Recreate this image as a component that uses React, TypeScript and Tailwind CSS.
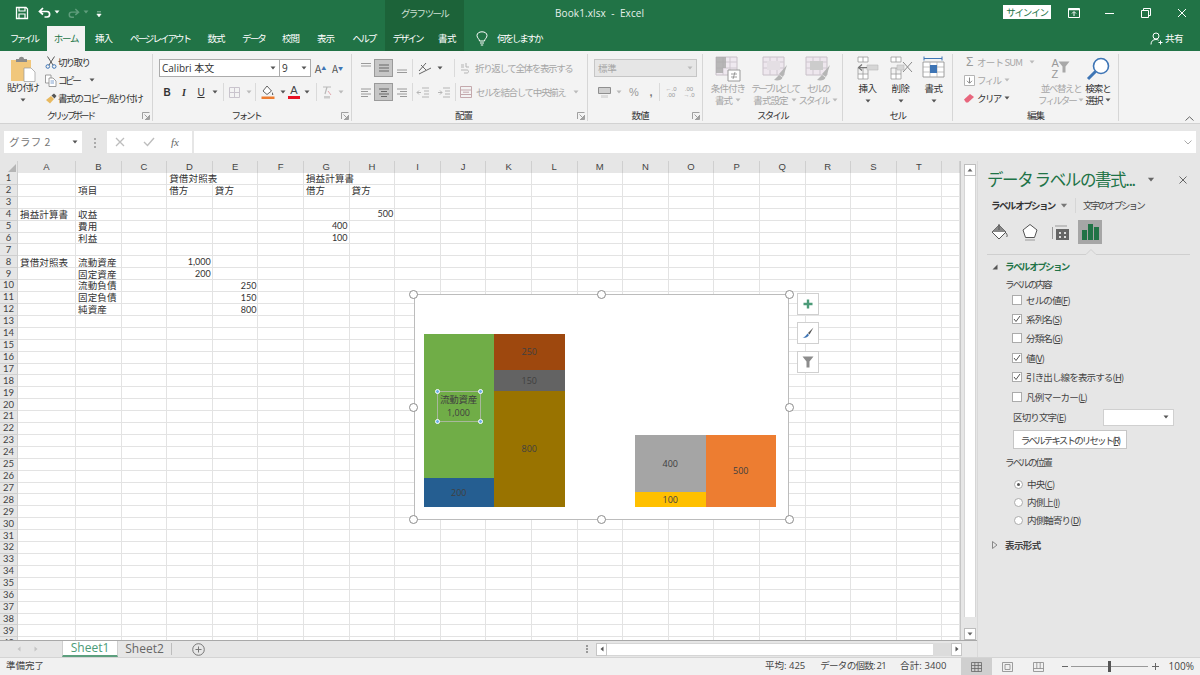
import type { ReactNode } from 'react'

const Caret = ({ c = '#555', big }: { c?: string; big?: boolean }) => (
  <svg width={big ? 8 : 6} height={big ? 5 : 4} viewBox="0 0 6 4" className="shrink-0">
    <path d="M0.5 0.5H5.5L3 3.5Z" fill={c} />
  </svg>
)

const Launcher = () => (
  <svg width="8" height="8" viewBox="0 0 8 8" className="shrink-0">
    <path d="M0.5 7V0.5H7.5M7.5 3V7.5H3M2.5 2.5L6.5 6.5M6.5 4V6.5H4" fill="none" stroke="#8a8a8a" strokeWidth="0.8" />
  </svg>
)

const Sep = ({ className = '' }: { className?: string }) => <div className={`w-px h-[18px] bg-[#dadada] shrink-0 ${className}`} />

// ---------- title bar ----------
const TitleBar = () => (
  <div className="flex h-[26px] bg-[#217346] text-white shrink-0">
    <div className="w-[385px] flex items-center pl-[15px]">
      <svg width="14" height="14" viewBox="0 0 14 14">
        <path d="M1.5 1.5H11L12.5 3V12.5H1.5Z" fill="none" stroke="#fff" strokeWidth="1.3" />
        <path d="M4 1.5V5H10V1.5M4 12.5V8H10V12.5" fill="none" stroke="#fff" strokeWidth="1.2" />
      </svg>
      <svg width="14" height="12" viewBox="0 0 14 12" className="ml-[9px]">
        <path d="M5 1L1.5 4.5L5 7.5M2 4.5H9C12.5 4.5 12.5 10 9 10H6.5" fill="none" stroke="#fff" strokeWidth="1.7" />
      </svg>
      <div className="ml-[2px] mb-[3px]"><Caret c="#fff" /></div>
      <svg width="13" height="11" viewBox="0 0 14 12" className="ml-[7px]">
        <path d="M9 1L12.5 4.5L9 7.5M12 4.5H5C1.5 4.5 1.5 10 5 10H7.5" fill="none" stroke="#5f9d7c" strokeWidth="1.6" />
      </svg>
      <div className="ml-[3px] mb-[3px]"><Caret c="#5f9d7c" /></div>
      <svg width="6" height="7" viewBox="0 0 6 7" className="ml-[7px] mt-[2px]">
        <path d="M1 0.8H5M0.8 3H5.2L3 6Z" fill="#fff" stroke="#fff" strokeWidth="0.5" />
      </svg>
    </div>
    <div className="w-[79px] bg-[#1c6339] flex items-center justify-center text-[9.5px] tracking-[-1.7px] text-[#cfe0d6]">グラフ ツール</div>
    <div className="w-[539px] pl-[91px] flex items-center text-[10px] text-[#e8f1ec] tracking-[0.1px] font-['Open_Sans','Noto_Sans_CJK_JP',sans-serif]">Book1.xlsx&nbsp; -&nbsp; Excel</div>
    <div className="w-[48px] h-[14px] mt-[5px] bg-white text-[#217346] flex items-center justify-center text-[9.5px] tracking-[-1.2px]">サインイン</div>
    <div className="flex-1 flex items-center">
      <svg width="12" height="10" viewBox="0 0 12 10" className="ml-[17px]">
        <path d="M0.5 0.5H11.5V9.5H0.5Z" fill="none" stroke="#fff" />
        <path d="M0.5 1.5H11.5" stroke="#fff" strokeWidth="1.5" />
        <path d="M6 8V4M4 5.5L6 3.5L8 5.5" fill="none" stroke="#fff" />
      </svg>
      <div className="w-[9px] h-px bg-white ml-[25px]" />
      <svg width="10" height="10" viewBox="0 0 10 10" className="ml-[27px]">
        <path d="M0.5 2.5H7.5V9.5H0.5ZM2.5 2.5V0.5H9.5V7.5H7.5" fill="none" stroke="#fff" />
      </svg>
      <svg width="10" height="10" viewBox="0 0 10 10" className="ml-[26px]">
        <path d="M1 1L9 9M9 1L1 9" stroke="#fff" strokeWidth="1" />
      </svg>
    </div>
  </div>
)

const tabs = [
  { label: 'ファイル', w: 'w-[47px]', tr: 'tracking-[-2.6px]' },
  { label: 'ホーム', w: 'w-[38px]', tr: 'tracking-[-1.3px]', active: true },
  { label: '挿入', w: 'w-[37px]', tr: 'tracking-[-1.1px]' },
  { label: 'ページ レイアウト', w: 'w-[76px]', tr: 'tracking-[-2px]' },
  { label: '数式', w: 'w-[36px]', tr: 'tracking-[-1px]' },
  { label: 'データ', w: 'w-[39px]', tr: 'tracking-[-1.8px]' },
  { label: '校閲', w: 'w-[35px]', tr: 'tracking-[-1px]' },
  { label: '表示', w: 'w-[35px]', tr: 'tracking-[-1px]' },
  { label: 'ヘルプ', w: 'w-[42px]', tr: 'tracking-[-1.9px]' },
  { label: 'デザイン', w: 'w-[45px]', tr: 'tracking-[-2px]', ctx: true },
  { label: '書式', w: 'w-[34px]', tr: 'tracking-[-0.4px]', ctx: true },
]

const TabRow = () => (
  <div className="flex h-[25px] bg-[#217346] text-[9.5px] text-white shrink-0">
    {tabs.map((t) => (
      <div
        key={t.label}
        className={`${t.w} ${t.tr} flex items-center justify-center ${t.active ? 'bg-[#f3f3f3] text-[#217346]' : ''} ${t.ctx ? 'bg-[#1c6339]' : ''}`}
      >
        {t.label}
      </div>
    ))}
    <svg width="12" height="15" viewBox="0 0 12 15" className="ml-[12px] mt-[5px]">
      <path d="M3.5 10C3.5 8 1 7 1 4.5C1 2.2 3.2 0.8 6 0.8C8.8 0.8 11 2.2 11 4.5C11 7 8.5 8 8.5 10ZM4 12H8M4.8 14H7.2" fill="none" stroke="#fff" strokeWidth="1" />
    </svg>
    <div className="ml-[9px] flex items-center text-[9.5px] tracking-[-2.1px]">何をしますか</div>
    <div className="ml-auto mr-[17px] flex items-center gap-[2px] text-[9.5px] tracking-[-0.5px]">
      <svg width="13" height="13" viewBox="0 0 13 13">
        <circle cx="6" cy="4" r="3" fill="none" stroke="#fff" />
        <path d="M1 12.5C1 9 3 7.5 6 7.5C7 7.5 8 7.8 8.6 8.3M10.5 8.5V12.5M8.5 10.5H12.5" fill="none" stroke="#fff" />
      </svg>
      共有
    </div>
  </div>
)

// ---------- ribbon ----------
const Group = ({ w, label, launcher, tr = 'tracking-[-0.9px]', lp = '', children }: { w: string; label: string; launcher?: boolean; tr?: string; lp?: string; children: ReactNode }) => (
  <div className={`${w} h-[67px] shrink-0 flex flex-col border-r border-[#d6d6d6]`}>
    <div className="h-[54px]">{children}</div>
    <div className={`h-[13px] relative top-[1px] flex items-center justify-center text-[9.5px] text-[#333] ${tr} ${lp}`}>
      {label}
      {launcher && (
        <div className="absolute right-[2px] top-[3px]">
          <Launcher />
        </div>
      )}
    </div>
  </div>
)

const Lines = ({ d, c = '#9a9a9a' }: { d: string; c?: string }) => (
  <svg width="14" height="14" viewBox="0 0 14 14">
    <path d={d} fill="none" stroke={c} strokeWidth="1" />
  </svg>
)

const Clipboard = () => (
  <Group w="w-[153px]" label="クリップボード" launcher tr="tracking-[-2.8px]" lp="pr-[12px]">
    <div className="flex">
      <div className="w-[45px] flex flex-col items-center pt-[2px] text-[#333]">
        <svg width="26" height="26" viewBox="0 0 26 26">
          <path d="M1 4H21V25H1Z" fill="#f1c77c" />
          <path d="M6 3H9C9 0 14 0 14 3H17V6H6Z" fill="#8b8b8b" />
          <path d="M14 12H21L25 16V25.5H14Z" fill="#fff" stroke="#999" strokeWidth="0.7" />
        </svg>
        <div className="text-[9.5px] tracking-[-1.7px] leading-[11px]">貼り付け</div>
        <div className="mt-[5px]"><Caret /></div>
      </div>
      <div className="flex flex-col text-[9.5px] text-[#333] tracking-[-1.3px] -mt-[1px]">
        <div className="h-[18px] flex items-center">
          <svg width="12" height="13" viewBox="0 0 12 13" className="mr-[1px]">
            <path d="M2.5 0.5L8 9M9.5 0.5L4 9" stroke="#555" strokeWidth="1" fill="none" />
            <circle cx="2.8" cy="10.5" r="1.8" fill="none" stroke="#3e75b5" />
            <circle cx="9.2" cy="10.5" r="1.8" fill="none" stroke="#3e75b5" />
          </svg>
          <span className="tracking-[-1.7px]">切り取り</span>
        </div>
        <div className="h-[18px] flex items-center">
          <svg width="12" height="13" viewBox="0 0 12 13" className="mr-[1px]">
            <path d="M0.5 1H6V9H0.5Z" fill="#fff" stroke="#888" strokeWidth="0.8" />
            <path d="M4 4H8L11 7V12.5H4Z" fill="#fff" stroke="#888" strokeWidth="0.8" />
            <path d="M5.5 7H9M5.5 9H9" stroke="#4a7dbb" strokeWidth="0.7" />
          </svg>
          <span className="tracking-[-2.4px]">コピー</span>
          <div className="ml-[10px]"><Caret /></div>
        </div>
        <div className="h-[18px] flex items-center">
          <svg width="12" height="11" viewBox="0 0 12 11" className="mr-[1px]">
            <path d="M1 7L6 3L9 6L5 10.5Z" fill="#e8b95f" />
            <path d="M6.5 2.5L9 0.5L11.5 3L9.5 5.5Z" fill="#555" />
          </svg>
          書式のコピー/貼り付け
        </div>
      </div>
    </div>
  </Group>
)

const Font = () => (
  <Group w="w-[199px]" label="フォント" launcher tr="tracking-[-2.2px]" lp="pr-[12px]">
    <div className="pl-[6px] pt-[5px] text-[#333]">
      <div className="flex h-[18px] items-center">
        <div className="w-[121px] h-[18px] bg-white border border-[#ababab] flex items-center justify-between pl-[2px] pr-[3px] text-[10px] font-['Open_Sans','Noto_Sans_CJK_JP',sans-serif]">
          <span>Calibri 本文</span>
          <Caret />
        </div>
        <div className="w-[31px] h-[18px] bg-white border border-l-0 border-[#ababab] flex items-center justify-between pl-[2px] pr-[3px] text-[10px] font-['Open_Sans',sans-serif]">
          <span>9</span>
          <Caret />
        </div>
        <div className="w-[17px] ml-[1px] text-[11px] text-center text-[#555]">A<sup className="text-[5px] text-[#3e75b5]">▲</sup></div>
        <div className="w-[17px] text-[10px] text-center text-[#555]">A<sup className="text-[5px] text-[#3e75b5]">▼</sup></div>
      </div>
      <div className="flex h-[18px] items-center mt-[6px] text-[10px] font-['Liberation_Sans',sans-serif]">
        <div className="w-[16px] text-center font-bold">B</div>
        <div className="w-[18px] text-center italic font-bold font-['Liberation_Serif',serif]">I</div>
        <div className="w-[16px] text-center underline">U</div>
        <div className="w-[12px] flex justify-center"><Caret /></div>
        <Sep className="ml-[2px]" />
        <div className="w-[20px] flex justify-center">
          <svg width="11" height="11" viewBox="0 0 11 11">
            <path d="M0.5 0.5H10.5V10.5H0.5ZM5.5 0.5V10.5M0.5 5.5H10.5" fill="none" stroke="#c9c4cd" />
          </svg>
        </div>
        <div className="w-[10px] flex justify-center"><Caret c="#bbb" /></div>
        <Sep className="ml-[1px]" />
        <div className="w-[24px] flex justify-center">
          <svg width="14" height="14" viewBox="0 0 14 14">
            <path d="M6 1L10.5 6L6 9.5L2 6Z" fill="#fff" stroke="#555" strokeWidth="0.9" />
            <path d="M11 7L12.5 9.5L11 10Z" fill="#555" />
            <path d="M0.5 11.5H13.5V14H0.5Z" fill="#ed7d31" />
          </svg>
        </div>
        <div className="w-[6px] flex justify-center"><Caret /></div>
        <div className="w-[16px] flex justify-center">
          <div className="flex flex-col items-center">
            <span className="text-[11px] leading-[10px] text-[#444]">A</span>
            <div className="w-[12px] h-[3px] bg-[#e81123] mt-[1px]" />
          </div>
        </div>
        <div className="w-[10px] flex justify-center"><Caret /></div>
        <Sep className="ml-[4px]" />
        <div className="w-[20px] flex justify-center">
          <svg width="10" height="13" viewBox="0 0 10 13">
            <path d="M1 1H9M5 1L3 8" stroke="#b9b9b9" strokeWidth="1.2" fill="none" />
            <path d="M2 10H8V12.5H2Z" fill="#cccccc" />
            <path d="M6 5L9 9" stroke="#e3a7ae" />
          </svg>
        </div>
        <div className="w-[8px] flex justify-center"><Caret c="#bbb" /></div>
      </div>
    </div>
  </Group>
)

const Selected = ({ children, s = 'w-[19px] h-[18px]' }: { children: ReactNode; s?: string }) => (
  <div className={`${s} bg-[#c6c6c6] border border-[#9a9a9a] flex items-center justify-center`}>{children}</div>
)

const Alignment = () => (
  <Group w="w-[236px]" label="配置" launcher lp="pr-[12px]">
    <div className="pl-[5px] pt-[5px] text-[9.5px] tracking-[-1.35px] text-[#a6a6a6]">
      <div className="flex h-[18px] items-center">
        <div className="w-[17px] flex justify-center"><Lines d="M2 2.5H12M2 5H12" /></div>
        <Selected><Lines d="M2 4H12M2 7H12M2 10H12" c="#666" /></Selected>
        <div className="w-[18px] flex justify-center"><Lines d="M2 9H12M2 11.5H12" /></div>
        <Sep className="ml-[1px]" />
        <div className="w-[24px] flex justify-center">
          <svg width="14" height="13" viewBox="0 0 14 13">
            <path d="M1 9L8 1M3 3L8 8M1 12L13 6" fill="none" stroke="#666" strokeWidth="1" />
          </svg>
        </div>
        <div className="w-[6px] flex justify-center"><Caret /></div>
        <div className="w-[10px]" />
        <Sep className="ml-[1px]" />
        <div className="w-[20px] flex justify-center">
          <svg width="11" height="12" viewBox="0 0 11 12">
            <path d="M1 3H4M1 5H4M6 1V5H9M1 8H7C9 8 9 11 7 11H4" fill="none" stroke="#b5b5b5" />
          </svg>
        </div>
        <span>折り返して全体を表示する</span>
      </div>
      <div className="flex h-[18px] items-center mt-[6px]">
        <div className="w-[17px] flex justify-center"><Lines d="M2 4H12M2 6.5H9M2 9H12M2 11.5H9" /></div>
        <Selected><Lines d="M2 4H12M4 6.5H10M2 9H12M4 11.5H10" c="#666" /></Selected>
        <div className="w-[18px] flex justify-center"><Lines d="M2 4H12M5 6.5H12M2 9H12M5 11.5H12" /></div>
        <Sep className="ml-[1px]" />
        <div className="w-[20px] ml-[0px] flex justify-center"><Lines d="M6 3H13M8 6H13M8 9H13M6 12H13M5 7.5H1M3 5.5L1 7.5L3 9.5" c="#b5b5b5" /></div>
        <div className="w-[22px] flex justify-center"><Lines d="M6 3H13M8 6H13M8 9H13M6 12H13M1 7.5H5M3 5.5L5 7.5L3 9.5" c="#b5b5b5" /></div>
        <Sep />
        <div className="w-[20px] flex justify-center">
          <Lines d="M1.5 1.5H12.5V12.5H1.5ZM1.5 5H12.5M1.5 9.5H12.5M4 7.2H10" c="#c4a9ad" />
        </div>
        <span>セルを結合して中央揃え</span>
        <div className="ml-[8px]"><Caret c="#bbb" /></div>
      </div>
    </div>
  </Group>
)

const NumberGroup = () => (
  <Group w="w-[115px]" label="数値" launcher lp="pr-[10px]">
    <div className="pl-[6px] pt-[5px] text-[#a6a6a6]">
      <div className="w-[103px] h-[18px] bg-[#e6e6e6] border border-[#c6c6c6] flex items-center justify-between px-[3px] text-[9.5px] tracking-[-0.3px]">
        標準
        <Caret c="#bbb" />
      </div>
      <div className="flex h-[18px] items-center mt-[6px] text-[11px] font-['Liberation_Sans',sans-serif]">
        <div className="w-[20px] flex justify-center">
          <svg width="13" height="13" viewBox="0 0 13 13">
            <path d="M0.5 1.5H12.5V7.5H0.5Z" fill="#cfcfcf" stroke="#8f8f8f" />
            <path d="M3 9H10V12H3Z" fill="#dcdcdc" />
          </svg>
        </div>
        <div className="w-[10px] flex justify-center"><Caret c="#bbb" /></div>
        <div className="w-[20px] text-center text-[#999]">%</div>
        <div className="w-[14px] text-center font-bold text-[#777]">,</div>
        <Sep className="ml-[1px]" />
        <div className="w-[22px] text-[6px] leading-[6px] text-center text-[#999]">←.0<br />.00</div>
        <div className="w-[14px] text-[6px] leading-[6px] text-center text-[#999]">.00<br />→.0</div>
      </div>
    </div>
  </Group>
)

const TableIcon = ({ brush, mark }: { brush?: boolean; mark?: boolean }) => (
  <svg width="26" height="26" viewBox="0 0 26 26">
    <path d="M1 1H22V19H1Z" fill={mark ? '#efe9f0' : '#eee7ee'} stroke="#c8c0c8" />
    <path d="M1 6H22M1 12H22M8 1V19M15 1V19" stroke="#cfc8d0" fill="none" />
    {mark ? <path d="M1 1H11V12H8V17H1Z" fill="#a9a9a9" opacity="0.8" /> : <path d="M5 5H18V14H5Z" fill={brush ? '#cccccc' : '#e4dfe4'} />}
    {mark && <path d="M13 14H25V25H13Z" fill="#fff" stroke="#999" />}
    {mark && <path d="M16 18H22M16 21H22M20 16L18 23" stroke="#888" fill="none" strokeWidth="0.8" />}
    {!mark && <path d="M25 9L17 18L21 21L25 9ZM17 19L12 24C16 25 20 24 20.5 21.5Z" fill="#b5b5b5" />}
  </svg>
)

const StyleBtn = ({ w, icon, l1, l2, tr1, tr2 }: { w: string; icon: ReactNode; l1: string; l2: string; tr1: string; tr2: string }) => (
  <div className={`${w} flex flex-col items-center pt-[2px] text-[9.5px] leading-[12px] text-[#a6a6a6] whitespace-nowrap`}>
    {icon}
    <div className={tr1}>{l1}</div>
    <div className={`flex items-center gap-[3px] ${tr2}`}>{l2}<Caret c="#bbb" /></div>
  </div>
)

const Styles = () => (
  <Group w="w-[140px]" label="スタイル" tr="tracking-[-1.8px]">
    <div className="flex pl-[3px]">
      <StyleBtn w="w-[44px]" icon={<TableIcon mark />} l1="条件付き" l2="書式" tr1="tracking-[-0.9px]" tr2="tracking-[-0.9px]" />
      <StyleBtn w="w-[50px]" icon={<TableIcon />} l1="テーブルとして" l2="書式設定" tr1="tracking-[-2.6px]" tr2="tracking-[-0.9px]" />
      <StyleBtn w="w-[36px]" icon={<TableIcon brush />} l1="セルの" l2="スタイル" tr1="tracking-[-2.2px]" tr2="tracking-[-2px]" />
    </div>
  </Group>
)

const CellIcon = ({ kind }: { kind: 'ins' | 'del' | 'fmt' }) => (
  <svg width="24" height="24" viewBox="0 0 24 24">
    {kind === 'fmt' ? (
      <>
        <path d="M2 2.5H20M2 0.5V4.5M20 0.5V4.5" stroke="#3e75b5" fill="none" />
        <path d="M1 6H22V21H1Z" fill="#fff" stroke="#888" strokeWidth="0.8" />
        <path d="M1 11H22M1 16H22M8 6V21M15 6V21" stroke="#aaa" strokeWidth="0.7" fill="none" />
        <path d="M8 9H15V17H8Z" fill="#3e75b5" />
      </>
    ) : (
      <>
        <path d="M2 1H12V6H2ZM2 18H12V23H2ZM7 1V6M7 18V23M2 12H12" fill="#fff" stroke="#9a9a9a" strokeWidth="0.8" />
        <path d="M2 12V18M12 12V18M7 18V12" stroke="#9a9a9a" strokeWidth="0.8" />
        <path d={kind === 'ins' ? 'M11 9H22V14H11Z' : 'M8 9H15V14H8Z'} fill="#d6d6d6" stroke="#b9b9b9" strokeWidth="0.6" />
        {kind === 'ins' ? (
          <path d="M11 11.5H3M6 8.5L2.5 11.5L6 14.5" fill="none" stroke="#777" strokeWidth="1.2" />
        ) : (
          <path d="M14 6L23 16M23 6L14 16" fill="none" stroke="#8a8a8a" strokeWidth="1" />
        )}
      </>
    )}
  </svg>
)

const CellBtn = ({ kind, label }: { kind: 'ins' | 'del' | 'fmt'; label: string }) => (
  <div className="w-[33px] flex flex-col items-center pt-[2px] text-[9.5px] tracking-[-0.4px] text-[#333]">
    <CellIcon kind={kind} />
    <div className="mt-[2px] leading-[12px]">{label}</div>
    <div className="mt-[5px]"><Caret /></div>
  </div>
)

const Cells = () => (
  <Group w="w-[110px]" label="セル" tr="tracking-[-1.4px]">
    <div className="flex pl-[8px]">
      <CellBtn kind="ins" label="挿入" />
      <CellBtn kind="del" label="削除" />
      <CellBtn kind="fmt" label="書式" />
    </div>
  </Group>
)

const Editing = () => (
  <Group w="w-[166px]" label="編集">
    <div className="flex pl-[8px]">
      <div className="w-[78px] flex flex-col text-[9.5px] tracking-[-1.6px] -mt-[1px]">
        <div className="h-[18px] flex items-center text-[#a6a6a6]">
          <span className="w-[16px] text-center text-[12px] text-[#999] font-['Liberation_Sans',sans-serif]">Σ</span>
          <span className="tracking-[-0.8px] whitespace-nowrap">オート SUM</span>
          <div className="ml-[7px]"><Caret c="#bbb" /></div>
        </div>
        <div className="h-[18px] flex items-center text-[#a6a6a6]">
          <div className="w-[16px] flex justify-center">
            <svg width="11" height="11" viewBox="0 0 11 11">
              <path d="M0.5 0.5H10.5V10.5H0.5Z" fill="#fff" stroke="#b5b5b5" />
              <path d="M5.5 2.5V8M3 5.8L5.5 8.3L8 5.8" fill="none" stroke="#888" />
            </svg>
          </div>
          フィル
          <div className="ml-[3px]"><Caret c="#bbb" /></div>
        </div>
        <div className="h-[18px] flex items-center text-[#333]">
          <div className="w-[16px] flex justify-center">
            <svg width="12" height="10" viewBox="0 0 12 10">
              <path d="M1 6.5L7 1L11 4L5 9.5H3Z" fill="#e8667d" />
            </svg>
          </div>
          クリア
          <div className="ml-[3px]"><Caret /></div>
        </div>
      </div>
      <div className="w-[44px] flex flex-col items-center pt-[2px] text-[9.5px] tracking-[-1.4px] leading-[12px] text-[#a6a6a6] whitespace-nowrap">
        <div className="h-[26px] flex items-center justify-center gap-[1px]">
          <div className="flex flex-col text-[11px] leading-[11px] text-[#999] font-['Liberation_Sans',sans-serif]">
            <span>A</span>
            <span>Z</span>
          </div>
          <svg width="12" height="12" viewBox="0 0 12 12" className="mb-[4px]">
            <path d="M0.5 0.5H11.5L7.5 5.5V11.5H4.5V5.5Z" fill="#a8a8a8" />
          </svg>
        </div>
        <div>並べ替えと</div>
        <div className="flex items-center gap-[2px] tracking-[-1.9px]">フィルター<Caret c="#bbb" /></div>
      </div>
      <div className="w-[28px] ml-[1px] flex flex-col items-center pt-[2px] text-[9.5px] tracking-[-1px] leading-[12px] text-[#333] whitespace-nowrap">
        <svg width="26" height="26" viewBox="0 0 26 26">
          <circle cx="16" cy="10" r="7.5" fill="#fff" stroke="#3e75b5" strokeWidth="1.6" />
          <path d="M10.5 15.5L3 23" stroke="#3e75b5" strokeWidth="3" />
        </svg>
        <div>検索と</div>
        <div className="flex items-center gap-[2px]">選択<Caret /></div>
      </div>
    </div>
  </Group>
)

const Ribbon = () => (
  <div className="relative flex h-[73px] pt-[3px] bg-[#f3f3f3] border-b border-[#d2d2d2] shrink-0">
    <Clipboard />
    <Font />
    <Alignment />
    <NumberGroup />
    <Styles />
    <Cells />
    <Editing />
    <svg width="9" height="5" viewBox="0 0 9 5" className="absolute right-[6px] bottom-[2px]">
      <path d="M0.5 4.5L4.5 0.8L8.5 4.5" fill="none" stroke="#666" />
    </svg>
  </div>
)

// ---------- formula bar ----------
const FormulaBar = () => (
  <div className="flex items-start h-[37px] pt-[7px] pl-[4px] pr-[4px] bg-[#e6e6e6] shrink-0">
    <div className="w-[78px] h-[22px] bg-white flex items-center justify-between pl-[5px] pr-[4px] text-[10.5px] text-[#777] tracking-[0.4px]">
      グラフ 2
      <Caret />
    </div>
    <div className="w-[25px] flex flex-col items-center gap-[2px] pt-[7px]">
      <div className="w-[2px] h-[2px] bg-[#aaa]" />
      <div className="w-[2px] h-[2px] bg-[#aaa]" />
      <div className="w-[2px] h-[2px] bg-[#aaa]" />
    </div>
    <div className="w-[85px] h-[22px] bg-white flex items-center text-[#bbb]">
      <svg width="10" height="10" viewBox="0 0 10 10" className="ml-[8px]">
        <path d="M1 1L9 9M9 1L1 9" stroke="#bdbdbd" strokeWidth="1.3" />
      </svg>
      <svg width="12" height="10" viewBox="0 0 12 10" className="ml-[18px]">
        <path d="M1 5L4.5 8.5L11 1" fill="none" stroke="#bdbdbd" strokeWidth="1.4" />
      </svg>
      <span className="ml-[16px] text-[11px] italic text-[#666] font-['Liberation_Serif',serif]">fx</span>
    </div>
    <div className="ml-[2px] flex-1 h-[22px] bg-white flex items-center justify-end pr-[4px]">
      <svg width="8" height="5" viewBox="0 0 8 5">
        <path d="M0.5 0.5L4 4L7.5 0.5" fill="none" stroke="#aaa" />
      </svg>
    </div>
  </div>
)

// ---------- sheet ----------
const cols = ['A', 'B', 'C', 'D', 'E', 'F', 'G', 'H', 'I', 'J', 'K', 'L', 'M', 'N', 'O', 'P', 'Q', 'R', 'S', 'T', '']
const colW = (i: number) => (i === 0 ? 'w-[58px]' : i === 20 ? 'flex-1' : 'w-[45.6px]')

const cells: Record<string, string> = {
  D1: '貸借対照表',
  G1: '損益計算書',
  B2: '項目',
  D2: '借方',
  E2: '貸方',
  G2: '借方',
  H2: '貸方',
  A4: '損益計算書',
  B4: '収益',
  H4: '500',
  B5: '費用',
  G5: '400',
  B6: '利益',
  G6: '100',
  A8: '貸借対照表',
  B8: '流動資産',
  D8: '1,000',
  B9: '固定資産',
  D9: '200',
  B10: '流動負債',
  E10: '250',
  B11: '固定負債',
  E11: '150',
  B12: '純資産',
  E12: '800',
}

const rows = Array.from({ length: 40 }, (_, i) => i + 1)

const Cell = ({ text, w }: { text?: string; w: string }) => {
  const num = text !== undefined && /^[0-9,]+$/.test(text)
  return (
    <div
      className={`${w} h-full shrink-0 border-r border-b border-[#e3e3e3] flex items-center whitespace-nowrap text-[#333] ${
        num ? "justify-end pr-[1px] font-['Lato',sans-serif] text-[9px]" : 'px-[2px] text-[9.5px] tracking-[0.15px]'
      }`}
    >
      {text}
    </div>
  )
}

const Handle = ({ className }: { className: string }) => (
  <div className={`absolute w-[9px] h-[9px] rounded-full bg-white border-[1.5px] border-[#8c8c8c] ${className}`} />
)

const Dot = ({ className }: { className: string }) => (
  <div className={`absolute w-[5px] h-[5px] rounded-full bg-[#6fb1e8] border border-white ${className}`} />
)

const Seg = ({ h, bg, text }: { h: string; bg: string; text?: string }) => (
  <div className={`${h} ${bg} flex items-center justify-center text-[9px] text-[#404040] font-['Open_Sans',sans-serif]`}>{text}</div>
)

const Chart = () => (
  <div className="absolute left-[413.5px] top-[133px] w-[375.5px] h-[225.5px] bg-white border-[1.5px] border-[#bcbcbc]">
    <div className="flex items-end h-full pl-[9px] pb-[11.5px] gap-[70.5px]">
      <div className="flex w-[141px] items-end">
        <div className="relative w-1/2 flex flex-col">
          <Seg h="h-[144.5px]" bg="bg-[#70ad47]" />
          <Seg h="h-[29px]" bg="bg-[#255e91]" text="200" />
          <div className="absolute left-[13px] top-[57px] w-[44px] h-[31px] border border-[#a8b89c] flex flex-col items-center justify-center text-[#404040] text-[9.5px] leading-[14px]">
            <span className="tracking-[-0.3px]">流動資産</span>
            <span className="font-['Open_Sans',sans-serif] text-[9px]">1,000</span>
            <Dot className="left-[-3px] top-[-3px]" />
            <Dot className="right-[-3px] top-[-3px]" />
            <Dot className="left-[-3px] bottom-[-3px]" />
            <Dot className="right-[-3px] bottom-[-3px]" />
          </div>
        </div>
        <div className="w-1/2 flex flex-col">
          <Seg h="h-[36.5px]" bg="bg-[#9e480e]" text="250" />
          <Seg h="h-[21px]" bg="bg-[#636363]" text="150" />
          <Seg h="h-[116px]" bg="bg-[#997300]" text="800" />
        </div>
      </div>
      <div className="flex w-[141px] items-end">
        <div className="w-1/2 flex flex-col">
          <Seg h="h-[57px]" bg="bg-[#a5a5a5]" text="400" />
          <Seg h="h-[15px]" bg="bg-[#ffc000]" text="100" />
        </div>
        <div className="w-1/2 flex flex-col">
          <Seg h="h-[72px]" bg="bg-[#ed7d31]" text="500" />
        </div>
      </div>
    </div>
    <Handle className="left-[-5.5px] top-[-5.5px]" />
    <Handle className="left-[182.5px] top-[-5.5px]" />
    <Handle className="right-[-5.5px] top-[-5.5px]" />
    <Handle className="left-[-5.5px] top-[107.5px]" />
    <Handle className="right-[-5.5px] top-[107.5px]" />
    <Handle className="left-[-5.5px] bottom-[-5.5px]" />
    <Handle className="left-[182.5px] bottom-[-5.5px]" />
    <Handle className="right-[-5.5px] bottom-[-5.5px]" />
  </div>
)

const ChartBtn = ({ children }: { children: ReactNode }) => (
  <div className="w-[22px] h-[22px] bg-white border border-[#d0d0d0] flex items-center justify-center">{children}</div>
)

const ChartButtons = () => (
  <div className="absolute left-[797px] top-[132px] flex flex-col gap-[7px]">
    <ChartBtn>
      <svg width="10" height="10" viewBox="0 0 10 10">
        <path d="M5 0.5V9.5M0.5 5H9.5" stroke="#4c9b78" strokeWidth="2.4" />
      </svg>
    </ChartBtn>
    <ChartBtn>
      <svg width="12" height="12" viewBox="0 0 12 12">
        <path d="M11.5 0.5L6 6L7.5 7.5Z" fill="#555" />
        <path d="M5.5 6.5L7 8C6 10.5 3 11 0.5 10.8C2.5 10 4 9 5.5 6.5Z" fill="#3e75b5" />
      </svg>
    </ChartBtn>
    <ChartBtn>
      <svg width="12" height="12" viewBox="0 0 12 12">
        <path d="M0.5 0.5H11.5L7.5 5.5V11.5H4.5V5.5Z" fill="#8c8c8c" />
      </svg>
    </ChartBtn>
  </div>
)

const Sheet = () => (
  <div className="relative w-[961px] h-[479px] overflow-hidden bg-white flex flex-col border-r border-[#c6c6c6] border-b-0">
    <div className="flex h-[12px] shrink-0 bg-[#e6e6e6]">
      <div className="w-[18px] relative border-r border-[#cfcfcf]">
        <svg width="8" height="8" viewBox="0 0 8 8" className="absolute right-[1px] bottom-[1px]">
          <path d="M8 0V8H0Z" fill="#b5b5b5" />
        </svg>
      </div>
      {cols.map((c, i) => (
        <div key={i} className={`${colW(i)} shrink-0 border-r border-[#cfcfcf] flex items-center justify-center text-[9.5px] text-[#444] font-['Liberation_Sans',sans-serif]`}>
          {c}
        </div>
      ))}
    </div>
    {rows.map((r) => (
      <div key={r} className="flex h-[11.92px] shrink-0">
        <div className="w-[18px] shrink-0 bg-[#e6e6e6] border-r border-b border-[#cfcfcf] flex items-center justify-center text-[9.5px] text-[#444] font-['Lato',sans-serif]">
          {r}
        </div>
        {cols.map((c, i) => (
          <Cell key={i} w={colW(i)} text={cells[`${c}${r}`]} />
        ))}
      </div>
    ))}
    <Chart />
    <ChartButtons />
  </div>
)

const VScroll = () => (
  <div className="w-[16px] h-[479px] pl-[3px] pr-[1px] flex flex-col items-stretch shrink-0">
    <div className="h-[12px] mt-[3px] bg-white border border-[#bdbdbd] flex items-center justify-center">
      <svg width="6" height="4" viewBox="0 0 6 4"><path d="M0.5 3.5H5.5L3 0.5Z" fill="#666" /></svg>
    </div>
    <div className="h-[441px] bg-white border-x border-[#d6d6d6]" />
    <div className="h-[12px] mt-[11px] bg-white border border-[#bdbdbd] flex items-center justify-center">
      <Caret c="#666" />
    </div>
  </div>
)

const SheetTabs = () => (
  <div className="h-[17px] bg-[#e6e6e6] border-t border-[#a8a8a8] flex items-stretch shrink-0 text-[12px] font-['Open_Sans',sans-serif]">
    <div className="w-[62px] flex items-center pl-[17px] gap-[13px] text-[#bdbdbd]">
      <svg width="4" height="6" viewBox="0 0 4 6"><path d="M3.5 0.5V5.5L0.5 3Z" fill="#c4c4c4" /></svg>
      <svg width="4" height="6" viewBox="0 0 4 6"><path d="M0.5 0.5V5.5L3.5 3Z" fill="#c4c4c4" /></svg>
    </div>
    <div className="w-[56px] bg-white border-x border-[#cfcfcf] border-b-2 border-b-[#5c9f7e] flex items-center justify-center text-[#4c9b78] leading-none pb-px">Sheet1</div>
    <div className="w-[54px] border-r border-[#bdbdbd] my-[2px] flex items-center justify-center text-[#666] leading-none">Sheet2</div>
    <div className="ml-[20px] flex items-center">
      <svg width="13" height="13" viewBox="0 0 13 13">
        <circle cx="6.5" cy="6.5" r="5.8" fill="none" stroke="#777" />
        <path d="M6.5 3.5V9.5M3.5 6.5H9.5" stroke="#777" />
      </svg>
    </div>
    <div className="ml-auto flex items-center mr-[15px]">
      <div className="flex flex-col gap-[1px] mr-[8px]">
        <div className="w-[2px] h-[2px] bg-[#999]" />
        <div className="w-[2px] h-[2px] bg-[#999]" />
        <div className="w-[2px] h-[2px] bg-[#999]" />
      </div>
      <div className="w-[11px] h-[13px] bg-white border border-[#c6c6c6] flex items-center justify-center">
        <svg width="4" height="6" viewBox="0 0 4 6"><path d="M3.5 0.5V5.5L0.5 3Z" fill="#555" /></svg>
      </div>
      <div className="w-[326px] h-[13px] bg-white border-y border-[#d6d6d6]" />
      <div className="w-[18px] h-[13px] bg-[#dcdcdc]" />
      <div className="w-[11px] h-[13px] bg-white border border-[#c6c6c6] flex items-center justify-center">
        <svg width="4" height="6" viewBox="0 0 4 6"><path d="M0.5 0.5V5.5L3.5 3Z" fill="#555" /></svg>
      </div>
    </div>
  </div>
)

// ---------- side panel ----------
const Label = ({ text, k }: { text: string; k: string }) => (
  <span className="whitespace-nowrap">
    {text}(<span className="underline">{k}</span>)
  </span>
)

const Check = ({ on, text, k }: { on?: boolean; text: string; k: string }) => (
  <div className="h-[19.4px] flex items-center">
    <div className="w-[10px] h-[10px] bg-white border border-[#ababab] flex items-center justify-center">
      {on && (
        <svg width="8" height="8" viewBox="0 0 8 8">
          <path d="M1 4L3 6.5L7 1" fill="none" stroke="#555" strokeWidth="1" />
        </svg>
      )}
    </div>
    <div className="ml-[4px]"><Label text={text} k={k} /></div>
  </div>
)

const Radio = ({ on, text, k }: { on?: boolean; text: string; k: string }) => (
  <div className="h-[18px] flex items-center">
    <div className="w-[9px] h-[9px] rounded-full bg-white border border-[#ababab] flex items-center justify-center">
      {on && <div className="w-[3px] h-[3px] rounded-full bg-[#555]" />}
    </div>
    <div className="ml-[4px]"><Label text={text} k={k} /></div>
  </div>
)

const Panel = () => (
  <div className="w-[223px] h-[496px] bg-[#e6e6e6] border-l border-[#d9d9d9] pl-[9px] text-[#444] text-[9.5px] tracking-[-0.85px] shrink-0 overflow-hidden">
    <div className="h-[37px] flex items-center text-[#217346]">
      <span className="text-[16.5px] tracking-[-1.4px] whitespace-nowrap w-[160px]">データ ラベルの書式...</span>
      <Caret c="#666" big />
      <svg width="8" height="8" viewBox="0 0 8 8" className="ml-[24px]">
        <path d="M0.5 0.5L7.5 7.5M7.5 0.5L0.5 7.5" stroke="#666" strokeWidth="1" />
      </svg>
    </div>
    <div className="h-[15px] flex items-center pl-[4px]">
      <span className="font-bold text-[#333] w-[69px] whitespace-nowrap tracking-[-1.6px]">ラベル オプション</span>
      <Caret c="#777" big />
      <div className="w-px h-[15px] bg-[#d6d6d6] ml-[7px]" />
      <span className="ml-[7px] tracking-[-1.9px]">文字のオプション</span>
    </div>
    <div className="flex items-center h-[26px] mt-[6px] pl-[4px]">
      <svg width="18" height="18" viewBox="0 0 18 18">
        <path d="M8 2L15 9L8 16L1 9Z" fill="#fff" stroke="#555" />
        <path d="M8 2L15 9H1Z" fill="#888" />
        <path d="M8 1V7M15 10C16.5 12 16.5 13 15.5 14" fill="none" stroke="#555" />
      </svg>
      <svg width="18" height="18" viewBox="0 0 18 18" className="ml-[12px]">
        <path d="M9 1.5L16 7L13.5 14.5H4.5L2 7Z" fill="#fff" stroke="#555" />
        <path d="M4 17H14" stroke="#999" />
      </svg>
      <svg width="18" height="18" viewBox="0 0 18 18" className="ml-[13px]">
        <path d="M0.5 4V16M3 3H15" fill="none" stroke="#999" />
        <path d="M4 6H17V17H4Z" fill="#666" />
        <path d="M7 9H9V11H7ZM12 9H14V11H12ZM7 13H9V15H7ZM12 13H14V15H12Z" fill="#ddd" />
      </svg>
      <div className="w-[24px] h-[24px] ml-[8px] bg-[#a6a6a6] flex items-end justify-center gap-[1px] pb-[4px]">
        <div className="w-[5px] h-[10px] bg-[#217346]" />
        <div className="w-[5px] h-[16px] bg-[#217346]" />
        <div className="w-[5px] h-[13px] bg-[#217346]" />
      </div>
    </div>
    <svg width="203" height="7" viewBox="0 0 203 7" className="block mt-[3px]">
      <path d="M0 6.5H99L104 1.5L109 6.5H203" fill="none" stroke="#cfcfcf" />
    </svg>
    <div className="h-[17px] mt-[3px] flex items-center">
      <svg width="6" height="6" viewBox="0 0 6 6" className="ml-[5px]">
        <path d="M5.5 0.5V5.5H0.5Z" fill="#555" />
      </svg>
      <span className="ml-[7px] font-bold text-[#217346] tracking-[-1.6px] whitespace-nowrap">ラベル オプション</span>
    </div>
    <div className="pl-[18px] mt-[1px] h-[16px] flex items-center tracking-[-1.85px]">ラベルの内容</div>
    <div className="pl-[25px] -mt-[2px]">
      <Check text="セルの値" k="F" />
      <Check on text="系列名" k="S" />
      <Check text="分類名" k="G" />
      <Check on text="値" k="V" />
      <Check on text="引き出し線を表示する" k="H" />
      <Check text="凡例マーカー" k="L" />
    </div>
    <div className="pl-[26px] mt-[1px] h-[20px] flex items-center">
      <span className="w-[90px]"><Label text="区切り文字" k="E" /></span>
      <div className="w-[71px] h-[17px] bg-white border border-[#d0d0d0] flex items-center justify-end pr-[4px]">
        <Caret />
      </div>
    </div>
    <div className="ml-[26px] mt-[3px] w-[114px] h-[19px] bg-white border border-[#c6c6c6] flex items-center justify-center whitespace-nowrap tracking-[-1.85px]">
      <Label text="ラベル テキストのリセット" k="R" />
    </div>
    <div className="pl-[18px] mt-[5px] h-[16px] flex items-center tracking-[-1.85px]">ラベルの位置</div>
    <div className="pl-[27px] mt-[5px]">
      <Radio on text="中央" k="C" />
      <Radio text="内側上" k="I" />
      <Radio text="内側軸寄り" k="D" />
    </div>
    <div className="h-[17px] mt-[7px] flex items-center">
      <svg width="6" height="8" viewBox="0 0 6 8" className="ml-[5px]">
        <path d="M0.5 0.5V7.5L5 4Z" fill="none" stroke="#888" />
      </svg>
      <span className="ml-[7px] font-bold tracking-[-0.6px]">表示形式</span>
    </div>
  </div>
)

// ---------- status bar ----------
const StatusBar = () => (
  <div className="h-[18px] bg-[#f1f1f1] border-t border-[#d4d4d4] flex items-center text-[9.5px] text-[#444] shrink-0 font-['Open_Sans','Noto_Sans_CJK_JP',sans-serif]">
    <span className="ml-[6px] tracking-[0px]">準備完了</span>
    <div className="ml-auto flex items-center h-full">
      <span className="mr-[15px]">平均: 425</span>
      <span className="mr-[14px] tracking-[-0.7px]">データの個数: 21</span>
      <span className="mr-[14px] tracking-[0.1px]">合計: 3400</span>
      <div className="w-[31px] h-full bg-[#cfcfcf] flex items-center justify-center">
        <svg width="11" height="10" viewBox="0 0 11 10">
          <path d="M0.5 0.5H10.5V9.5H0.5ZM0.5 3.5H10.5M0.5 6.5H10.5M3.8 0.5V9.5M7.2 0.5V9.5" fill="none" stroke="#666" strokeWidth="0.8" />
        </svg>
      </div>
      <div className="w-[31px] flex justify-center">
        <svg width="11" height="10" viewBox="0 0 11 10">
          <path d="M0.5 0.5H10.5V9.5H0.5ZM3 2.5H8V7.5H3Z" fill="none" stroke="#888" strokeWidth="0.8" />
        </svg>
      </div>
      <div className="w-[31px] flex justify-center">
        <svg width="11" height="10" viewBox="0 0 11 10">
          <path d="M0.5 0.5H10.5V9.5H0.5ZM0.5 6.5H10.5M3.8 0.5V6.5M7.2 0.5V6.5" fill="none" stroke="#888" strokeWidth="0.8" />
        </svg>
      </div>
      <div className="w-[6px] h-px bg-[#666] ml-[8px]" />
      <div className="relative w-[77px] h-px bg-[#999] ml-[3px]">
        <div className="absolute left-[37px] top-[-5px] w-[3px] h-[11px] bg-[#555]" />
      </div>
      <svg width="7" height="7" viewBox="0 0 7 7" className="ml-[4px]">
        <path d="M3.5 0V7M0 3.5H7" stroke="#666" />
      </svg>
      <span className="ml-[10px] mr-[6px] text-[10px]">100%</span>
    </div>
  </div>
)

export default function App() {
  return (
    <div className="w-[1200px] h-[675px] flex flex-col overflow-hidden bg-[#e6e6e6] font-['Noto_Sans_CJK_JP','Liberation_Sans',sans-serif]">
      <TitleBar />
      <TabRow />
      <Ribbon />
      <FormulaBar />
      <div className="flex h-[496px] shrink-0">
        <div className="w-[977px] flex flex-col shrink-0">
          <div className="flex h-[479px]">
            <Sheet />
            <VScroll />
          </div>
          <SheetTabs />
        </div>
        <Panel />
      </div>
      <StatusBar />
    </div>
  )
}
